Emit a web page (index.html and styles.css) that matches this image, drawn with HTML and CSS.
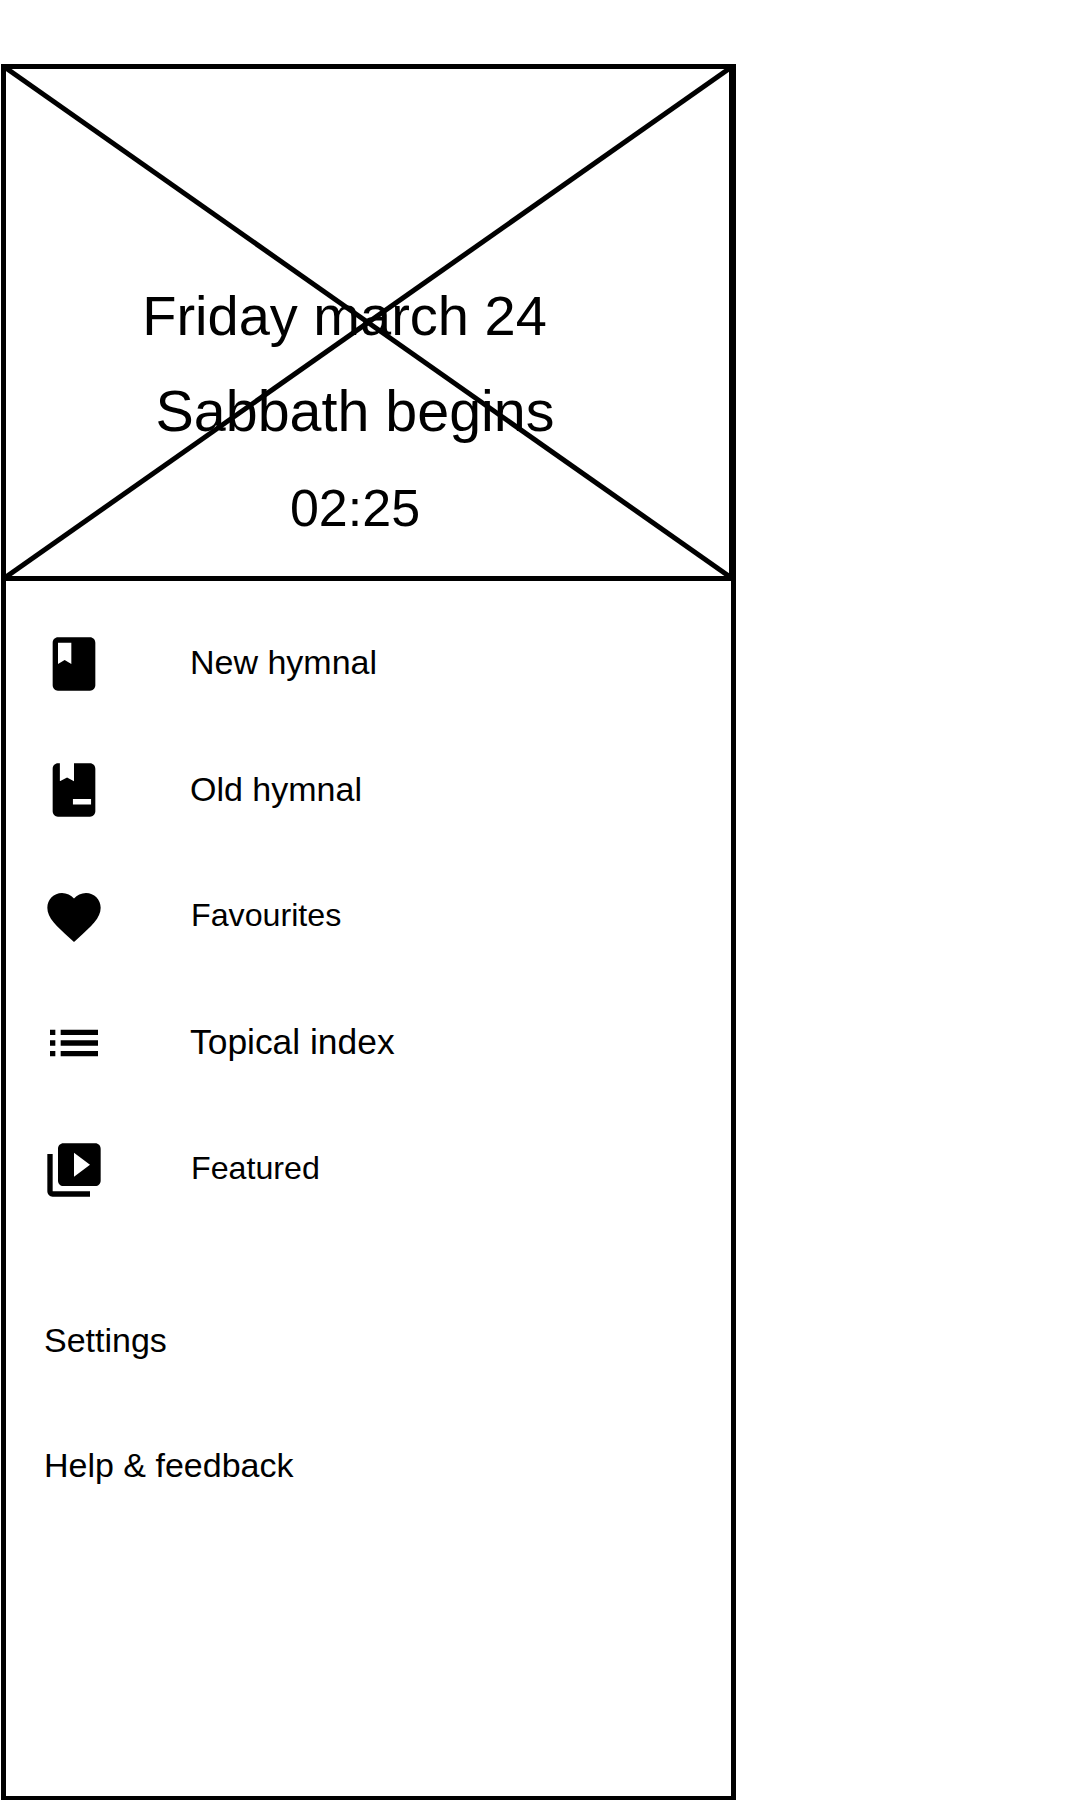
FILE: index.html
```html
<!DOCTYPE html>
<html lang="en">

<head>
  <meta charset="UTF-8">
  <title>Hymnal drawer</title>
  <link rel="stylesheet" href="styles.css">
</head>

<body>
<div class="frame">
  <div class="hero">
    <svg class="hero-cross" viewBox="0 0 730 513" preserveAspectRatio="none">
      <line x1="0" y1="0" x2="730" y2="513"/>
      <line x1="730" y1="0" x2="0" y2="513"/>
    </svg>
    <div class="hero-line hero-date">Friday march 24</div>
    <div class="hero-line hero-title">Sabbath begins</div>
    <div class="hero-line hero-time">02:25</div>
  </div>

  <ul class="menu">
    <li>
      <svg class="icon" viewBox="0 0 24 24"><path d="M18 2H6c-1.1 0-2 .9-2 2v16c0 1.1.9 2 2 2h12c1.1 0 2-.9 2-2V4c0-1.1-.9-2-2-2zM6 4h5v8l-2.5-1.5L6 12V4z"/></svg>
      <span>New hymnal</span>
    </li>
    <li>
      <svg class="icon" viewBox="0 0 24 24"><path fill-rule="evenodd" d="M6.7 2H6c-1.1 0-2 .9-2 2v16c0 1.1.9 2 2 2h12c1.1 0 2-.9 2-2V4c0-1.1-.9-2-2-2h-6v6.7l-2.6-1.4-2.7 1.4V2zM11.6 15.4h6.8v2h-6.8v-2z"/></svg>
      <span class="label-low">Old hymnal</span>
    </li>
    <li>
      <svg class="icon" viewBox="0 0 24 24"><path d="M12 21.35l-1.45-1.32C5.4 15.36 2 12.28 2 8.5 2 5.42 4.42 3 7.5 3c1.74 0 3.41.81 4.5 2.09C13.09 3.81 14.76 3 16.5 3 19.58 3 22 5.42 22 8.5c0 3.78-3.4 6.86-8.55 11.54L12 21.35z"/></svg>
      <span class="label-small">Favourites</span>
    </li>
    <li>
      <svg class="icon" viewBox="0 0 24 24"><path d="M3 13h2v-2H3v2zm0 4h2v-2H3v2zm0-8h2V7H3v2zm4 4h14v-2H7v2zm0 4h14v-2H7v2zM7 7v2h14V7H7z"/></svg>
      <span class="label-large label-low">Topical index</span>
    </li>
    <li>
      <svg class="icon" viewBox="0 0 24 24"><path d="M4 6H2v14c0 1.1.9 2 2 2h14v-2H4V6zm16-4H8c-1.1 0-2 .9-2 2v12c0 1.1.9 2 2 2h12c1.1 0 2-.9 2-2V4c0-1.1-.9-2-2-2zm-8 12.5v-9l6 4.5-6 4.5z"/></svg>
      <span class="label-small">Featured</span>
    </li>
  </ul>

  <ul class="links">
    <li>Settings</li>
    <li>Help &amp; feedback</li>
  </ul>
</div>
</body>

</html>
```

FILE: styles.css
```css
* {
  padding: 0;
  margin: 0;
  list-style: none;
  box-sizing: border-box;
}

body {
  background: #fff;
  color: #000;
  font-family: "Liberation Sans", Arial, sans-serif;
}

.frame {
  width: 735px;
  height: 1736px;
  margin: 64px 0 0 1px;
  border: 5px solid #000;
  border-bottom-width: 4px;
}

.hero {
  position: relative;
  height: 512px;
  padding-top: 199px;
  border-bottom: 5px solid #000;
  border-right: 2px solid #000;
  display: flex;
  flex-direction: column;
  align-items: center;
}

.hero-cross {
  position: absolute;
  left: -3px;
  top: -3px;
  width: calc(100% + 7px);
  height: calc(100% + 6px);
}

.hero-cross line {
  stroke: #000;
  stroke-width: 5;
}

.hero-line {
  position: relative;
  height: 97px;
  line-height: 96px;
  margin-right: 25px;
}

.hero-date {
  height: 95px;
  margin-right: 46px;
  font-size: 56px;
}

.hero-title {
  font-size: 57.4px;
}

.hero-time {
  font-size: 52px;
}

.menu {
  padding: 51px 0 0 36px;
  display: flex;
  flex-direction: column;
  gap: 62.4px;
}

.menu li {
  height: 64px;
  display: flex;
  align-items: center;
  gap: 84px;
  font-size: 34px;
}

.menu span {
  margin-bottom: 3px;
}

.menu .label-small {
  font-size: 32.2px;
  margin-left: 1px;
}

.menu .label-large {
  font-size: 35.4px;
}

.menu .label-low {
  margin-bottom: 1px;
}

.icon {
  width: 64px;
  height: 64px;
  flex: none;
}

.links {
  padding: 118px 0 0 38px;
  display: flex;
  flex-direction: column;
  gap: 85px;
  font-size: 34px;
}

.links li {
  height: 40px;
  line-height: 40px;
}
```
